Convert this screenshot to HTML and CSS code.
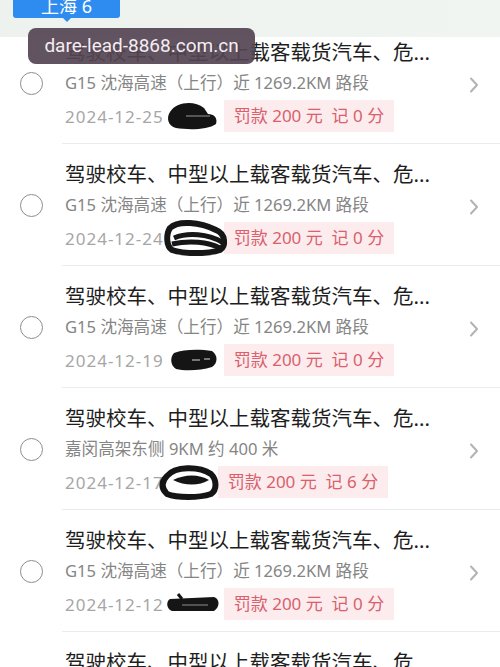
FILE: index.html
```html
<!DOCTYPE html>
<html lang="zh-CN">
<head>
    <meta charset="UTF-8">
    <meta name="viewport" content="width=device-width, initial-scale=1.0">
    <title>违法记录</title>
    <link rel="stylesheet" href="styles.css">
</head>
<body>
    <div class="page">
        <!-- City tabs -->
        <div class="top-bar">
            <div class="city-tab">上海 6</div>
        </div>

        <!-- Record list -->
        <div class="list-wrap">
            <ul class="record-list">
                <li class="record">
                    <span class="check"></span>
                    <div class="record-body">
                        <div class="info">
                            <p class="title">驾驶校车、中型以上载客载货汽车、危...</p>
                            <p class="place">G15 沈海高速（上行）近 1269.2KM 路段</p>
                            <div class="meta">
                                <span class="date">2024-12-25</span>
                                <span class="redact"><svg width="56" height="32" viewBox="0 0 56 32"><path d="M6 12 C12 2 30 0 40 8 L44 14 C50 14 54 18 52 24 C44 30 24 30 12 28 C4 26 2 18 6 12 Z" fill="#141414"/><path d="M22 16 L46 16" stroke="#555" stroke-width="2"/></svg></span>
                                <span class="fine">罚款 200 元&nbsp;&nbsp;记 0 分</span>
                            </div>
                        </div>
                        <svg class="arrow" width="10" height="16" viewBox="0 0 10 16"><path d="M2 1.5 L8 8 L2 14.5" fill="none" stroke="#b3b3b3" stroke-width="2" stroke-linecap="round" stroke-linejoin="round"/></svg>
                    </div>
                </li>
                <li class="record">
                    <span class="check"></span>
                    <div class="record-body">
                        <div class="info">
                            <p class="title">驾驶校车、中型以上载客载货汽车、危...</p>
                            <p class="place">G15 沈海高速（上行）近 1269.2KM 路段</p>
                            <div class="meta">
                                <span class="date">2024-12-24</span>
                                <span class="redact"><svg width="64" height="36" viewBox="0 0 64 36"><path d="M6 8 C14 0 36 2 52 10 C62 14 62 26 56 30 C44 34 20 34 8 30 C2 26 2 14 6 8 Z" fill="none" stroke="#161616" stroke-width="6"/><path d="M10 18 C24 12 44 14 58 22 M8 24 C26 20 44 22 56 28" fill="none" stroke="#161616" stroke-width="5"/></svg></span>
                                <span class="fine">罚款 200 元&nbsp;&nbsp;记 0 分</span>
                            </div>
                        </div>
                        <svg class="arrow" width="10" height="16" viewBox="0 0 10 16"><path d="M2 1.5 L8 8 L2 14.5" fill="none" stroke="#b3b3b3" stroke-width="2" stroke-linecap="round" stroke-linejoin="round"/></svg>
                    </div>
                </li>
                <li class="record">
                    <span class="check"></span>
                    <div class="record-body">
                        <div class="info">
                            <p class="title">驾驶校车、中型以上载客载货汽车、危...</p>
                            <p class="place">G15 沈海高速（上行）近 1269.2KM 路段</p>
                            <div class="meta">
                                <span class="date">2024-12-19</span>
                                <span class="redact"><svg width="56" height="26" viewBox="0 0 56 26"><path d="M10 6 C20 2 36 2 48 4 C54 8 54 16 48 20 C36 24 20 24 12 22 C6 18 6 10 10 6 Z" fill="#151515"/><path d="M28 13 L36 13 M40 12 L46 12" stroke="#777" stroke-width="2"/></svg></span>
                                <span class="fine">罚款 200 元&nbsp;&nbsp;记 0 分</span>
                            </div>
                        </div>
                        <svg class="arrow" width="10" height="16" viewBox="0 0 10 16"><path d="M2 1.5 L8 8 L2 14.5" fill="none" stroke="#b3b3b3" stroke-width="2" stroke-linecap="round" stroke-linejoin="round"/></svg>
                    </div>
                </li>
                <li class="record">
                    <span class="check"></span>
                    <div class="record-body">
                        <div class="info">
                            <p class="title">驾驶校车、中型以上载客载货汽车、危...</p>
                            <p class="place">嘉闵高架东侧 9KM 约 400 米</p>
                            <div class="meta">
                                <span class="date">2024-12-17</span>
                                <span class="redact shift"><svg width="62" height="36" viewBox="0 0 60 36"><path d="M8 12 C16 2 40 2 52 10 C58 16 58 26 52 30 C40 34 18 34 8 30 C2 24 2 18 8 12 Z" fill="none" stroke="#151515" stroke-width="6"/><path d="M14 16 C26 10 40 10 50 16 C40 22 26 22 14 16 Z" fill="#151515"/></svg></span>
                                <span class="fine">罚款 200 元&nbsp;&nbsp;记 6 分</span>
                            </div>
                        </div>
                        <svg class="arrow" width="10" height="16" viewBox="0 0 10 16"><path d="M2 1.5 L8 8 L2 14.5" fill="none" stroke="#b3b3b3" stroke-width="2" stroke-linecap="round" stroke-linejoin="round"/></svg>
                    </div>
                </li>
                <li class="record">
                    <span class="check"></span>
                    <div class="record-body">
                        <div class="info">
                            <p class="title">驾驶校车、中型以上载客载货汽车、危...</p>
                            <p class="place">G15 沈海高速（上行）近 1269.2KM 路段</p>
                            <div class="meta">
                                <span class="date">2024-12-12</span>
                                <span class="redact"><svg width="58" height="22" viewBox="0 0 58 22"><path d="M6 6 L50 4 C56 6 56 14 50 18 L8 18 C2 16 2 8 6 6 Z" fill="#151515"/><path d="M14 1 L18 6" stroke="#151515" stroke-width="3"/><path d="M18 12 L44 12" stroke="#666" stroke-width="1.5"/></svg></span>
                                <span class="fine">罚款 200 元&nbsp;&nbsp;记 0 分</span>
                            </div>
                        </div>
                        <svg class="arrow" width="10" height="16" viewBox="0 0 10 16"><path d="M2 1.5 L8 8 L2 14.5" fill="none" stroke="#b3b3b3" stroke-width="2" stroke-linecap="round" stroke-linejoin="round"/></svg>
                    </div>
                </li>
                <li class="record">
                    <span class="check"></span>
                    <div class="record-body">
                        <div class="info">
                            <p class="title">驾驶校车、中型以上载客载货汽车、危...</p>
                            <p class="place">G15 沈海高速（上行）近 1269.2KM 路段</p>
                            <div class="meta">
                                <span class="date">2024-12-10</span>
                                <span class="redact"></span>
                                <span class="fine">罚款 200 元&nbsp;&nbsp;记 0 分</span>
                            </div>
                        </div>
                        <svg class="arrow" width="10" height="16" viewBox="0 0 10 16"><path d="M2 1.5 L8 8 L2 14.5" fill="none" stroke="#b3b3b3" stroke-width="2" stroke-linecap="round" stroke-linejoin="round"/></svg>
                    </div>
                </li>
            </ul>
        </div>

        <!-- Watermark -->
        <div class="watermark">dare-lead-8868.com.cn</div>
    </div>
</body>
</html>
```

FILE: styles.css
```css
body {
    margin: 0;
    background-color: #fff;
    font-family: "Noto Sans", "Noto Sans CJK SC", sans-serif;
}
.page {
    position: relative;
    width: 500px;
    height: 667px;
    overflow: hidden;
}
.top-bar {
    height: 37px;
    background: linear-gradient(90deg, #eef2ef, #f1f5f2);
    position: relative;
    z-index: 2;
}
.city-tab {
    position: relative;
    margin-left: 13px;
    width: 107px;
    height: 18px;
    background-color: #2e8cf0;
    border-radius: 0 0 3px 3px;
    color: #fff;
    font-size: 18px;
    line-height: 12px;
    text-align: center;
}
.city-tab::after {
    content: "";
    position: absolute;
    left: 50%;
    bottom: -4px;
    margin-left: -4px;
    border-left: 4px solid transparent;
    border-right: 4px solid transparent;
    border-top: 4px solid #2e8cf0;
}
.list-wrap {
    height: 630px;
    overflow: hidden;
}
.record-list {
    list-style: none;
    margin: -15px 0 0;
    padding: 0;
}
.record {
    display: flex;
    align-items: center;
}
.check {
    flex: none;
    box-sizing: border-box;
    width: 23px;
    height: 23px;
    margin: 0 19px 0 20px;
    border: 1.5px solid #8d8d8d;
    border-radius: 50%;
}
.record-body {
    flex: 1;
    display: flex;
    align-items: center;
    padding: 15px 0 10px 3px;
    border-bottom: 1px solid #ececf0;
}
.info {
    flex: 1;
    min-width: 0;
}
.title {
    margin: 0;
    font-size: 20.5px;
    line-height: 30px;
    color: #1e1e1e;
    white-space: nowrap;
    overflow: hidden;
    text-overflow: ellipsis;
}
.place {
    margin: 0;
    font-size: 16.6px;
    line-height: 32px;
    color: #858585;
    white-space: nowrap;
}
.meta {
    display: flex;
    align-items: center;
    height: 34px;
}
.date {
    font-size: 17px;
    letter-spacing: 1px;
    color: #a6a6a6;
}
/* scribbled-out time, may spill over the tag */
.redact {
    flex: none;
    position: relative;
    z-index: 1;
    width: 56px;
    height: 34px;
    display: flex;
    align-items: center;
}
.redact svg {
    flex: none;
    overflow: visible;
}
.redact.shift {
    margin-left: -6px;
}
.fine {
    margin-left: 4px;
    padding: 0 10px;
    height: 32px;
    line-height: 32px;
    background-color: #fcecee;
    color: #d9606d;
    font-size: 17px;
}
.arrow {
    flex: none;
    margin: 0 21px 0 10px;
}
.watermark {
    position: absolute;
    top: 28px;
    left: 28px;
    width: 227px;
    height: 36px;
    line-height: 36px;
    border-radius: 8px;
    background-color: rgba(84, 68, 81, 0.92);
    color: #f4edf2;
    font-family: Roboto, sans-serif;
    font-size: 19px;
    text-align: center;
    z-index: 3;
}
```
